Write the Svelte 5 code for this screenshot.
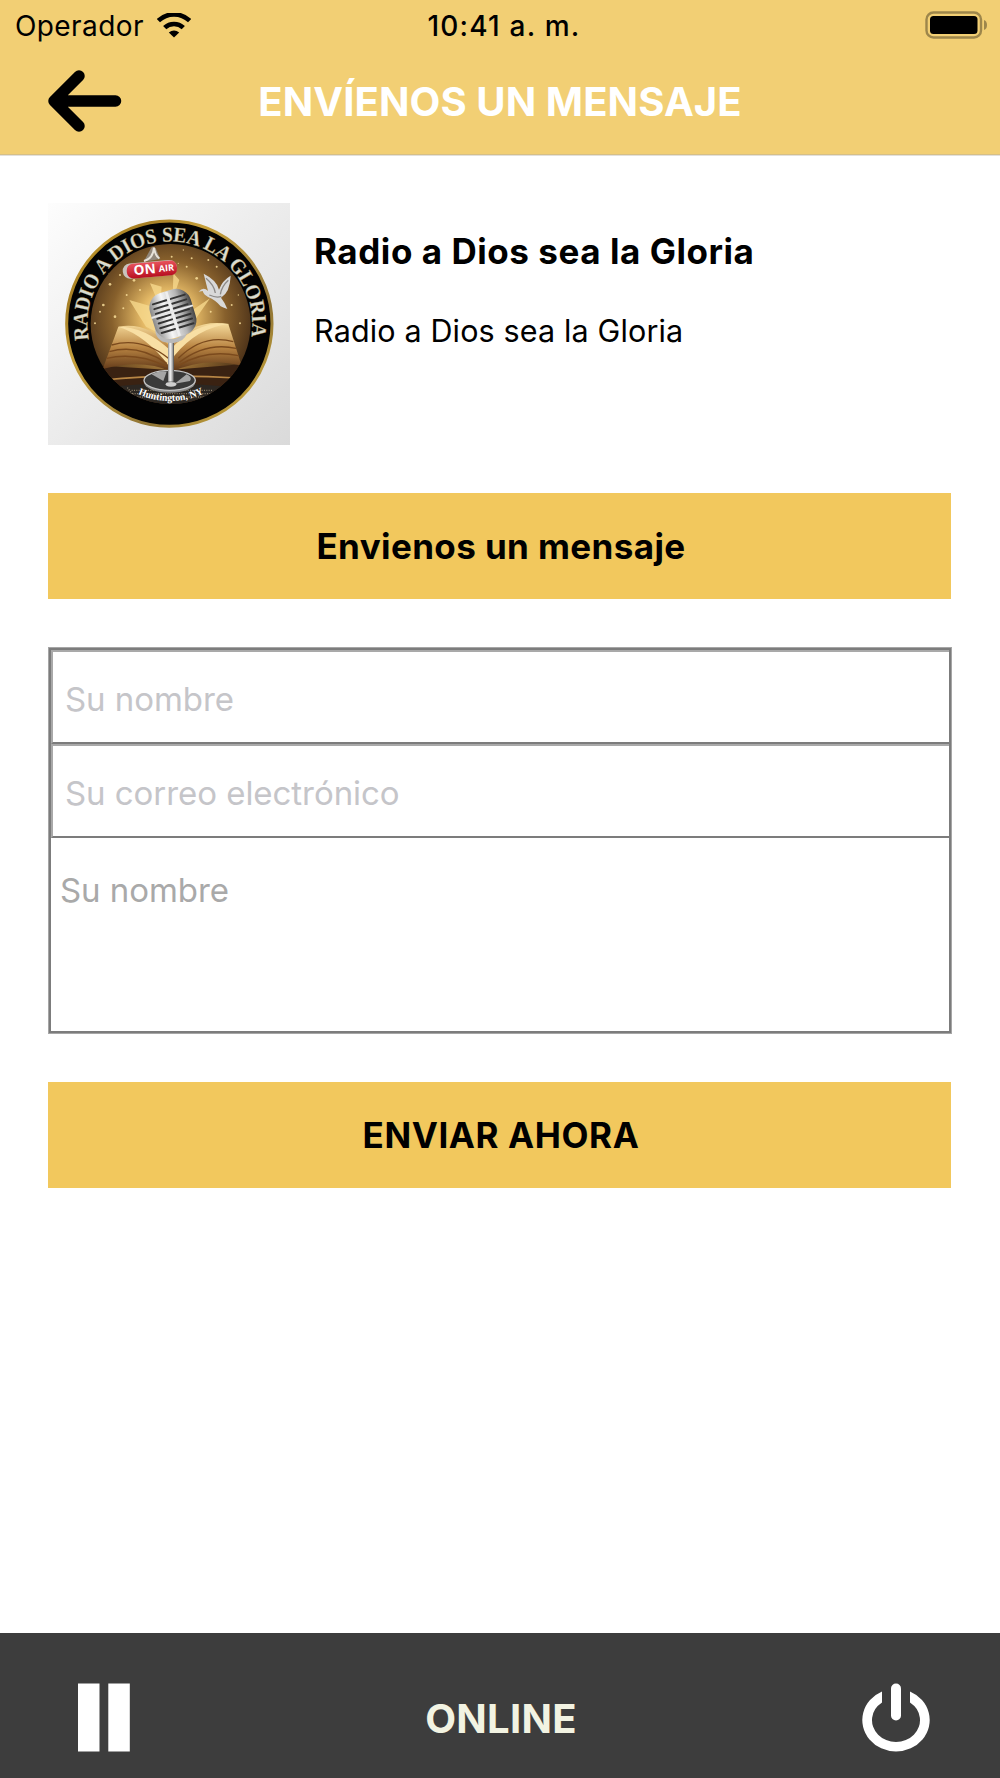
<script lang="ts">
	let name = $state('');
	let email = $state('');
	let message = $state('');

	const sparks = [
		[210, 268, 4], [240, 240, 3], [282, 256, 4], [300, 285, 3], [190, 330, 4], [165, 385, 3],
		[455, 190, 3], [470, 250, 4], [505, 195, 3], [560, 205, 3], [440, 215, 3], [395, 185, 3],
		[575, 330, 3], [225, 365, 4], [250, 340, 3], [530, 215, 3], [415, 205, 2], [595, 300, 2],
		[205, 235, 2], [180, 350, 3], [512, 350, 3], [260, 300, 3], [430, 165, 2], [600, 385, 3]
	];
	const slots = [0, 1, 2, 3, 4, 5, 6];
</script>

<div class="screen">
	<header class="top">
		<div class="status">
			<div class="carrier">
				<span class="operator">Operador</span>
				<svg class="wifi" viewBox="0 0 34 25">
					<path d="M1.4 7.7a22.500 22.500 0 0 1 31.200 0M7.700 14.700a13.400 13.400 0 0 1 18.600 0" fill="none" stroke="#000" stroke-width="4.6" />
					<path d="M11.800 19.600q5.200-4 10.400 0L17 24.600Z" />
				</svg>
			</div>
			<span class="time">10:41 a. m.</span>
			<svg class="battery" viewBox="0 0 64 28">
				<rect x="1.5" y="1.5" width="54.5" height="25" rx="7" fill="none" stroke="#9d864b" stroke-width="2.4" />
				<rect x="5" y="5" width="47.5" height="18" rx="3.5" />
				<path d="M59 9q3 1.200 3 5t-3 5Z" fill="#9d864b" />
			</svg>
		</div>
		<div class="nav">
			<button class="back" type="button" aria-label="Atrás">
				<svg viewBox="0 0 74 62">
					<path d="M31 6 6 31l25 25M6 31h61.500" fill="none" stroke="#000" stroke-width="11.500" stroke-linecap="round" stroke-linejoin="round" />
					<path d="M8 31 18 20v22z" />
				</svg>
			</button>
			<h1>ENVÍENOS UN MENSAJE</h1>
		</div>
	</header>

	<main>
		<section class="station">
			<svg class="logo" viewBox="24 24 726 726">
				<defs>
					<linearGradient id="paper" x1="0" y1="0" x2="1" y2="1">
						<stop offset="0" stop-color="#fdfdfd" />
						<stop offset="1" stop-color="#dadada" />
					</linearGradient>
					<linearGradient id="gold" x1="0" y1="0" x2="1" y2="1">
						<stop offset="0" stop-color="#e2b62f" />
						<stop offset="0.2" stop-color="#a67f25" />
						<stop offset="0.35" stop-color="#c7a03a" />
						<stop offset="0.7" stop-color="#8f7435" />
						<stop offset="1" stop-color="#e0b838" />
					</linearGradient>
					<radialGradient id="glow" cx="0.48" cy="0.45" r="0.58">
						<stop offset="0" stop-color="#fff3c4" />
						<stop offset="0.28" stop-color="#e3b865" />
						<stop offset="0.6" stop-color="#87602c" />
						<stop offset="1" stop-color="#3c2513" />
					</radialGradient>
					<linearGradient id="page" x1="0" y1="0" x2="0" y2="1">
						<stop offset="0" stop-color="#f6dc9c" />
						<stop offset="0.5" stop-color="#b98442" />
						<stop offset="1" stop-color="#5b3416" />
					</linearGradient>
					<linearGradient id="steel" x1="0" y1="0" x2="1" y2="0">
						<stop offset="0" stop-color="#888" />
						<stop offset="0.35" stop-color="#f6f6f6" />
						<stop offset="0.7" stop-color="#b5b5b5" />
						<stop offset="1" stop-color="#444" />
					</linearGradient>
					<linearGradient id="sign" x1="0" y1="0" x2="0" y2="1">
						<stop offset="0" stop-color="#e8525c" />
						<stop offset="1" stop-color="#b80f20" />
					</linearGradient>
					<clipPath id="disc"><circle cx="392" cy="387" r="240" /></clipPath>
					<path id="nameArc" d="M147 434A247 247 0 1 1 634 421" />
					<path id="cityArc" d="M294 597A232 232 0 0 0 494 594" />
				</defs>
				<rect x="24" y="24" width="726" height="726" fill="url(#paper)" />
				<circle cx="388" cy="386" r="308" fill="#020202" stroke="url(#gold)" stroke-width="9" />
				<g clip-path="url(#disc)">
					<rect x="150" y="145" width="490" height="490" fill="url(#glow)" />
					<path d="M330 265l35 10-5 60zM400 235l18 20-20 60zM268 315l70 20 10 75-30-15zM510 310l-60 40-10 60z" fill="#f6d88c" opacity="0.8" />
					{#each sparks as [x, y, r]}
						<circle cx={x} cy={y} r={r} fill="#ffe6a0" opacity="0.8" />
					{/each}
					<path d="M150 510 390 525 640 505V640H150Z" fill="#3a2212" />
					<path d="M190 555q190-20 400-6" fill="none" stroke="#b88645" stroke-width="5" />
					<path d="M188 522 235 395q90-15 155 60q70-85 175-68l40 125q-110-28-210 18q-90-40-207-8Z" fill="url(#page)" />
					<path d="M235 395q80 0 155 70q80-90 178-78q-95 10-165 95l-13 35q-70-95-155-122Z" fill="#f8dfa4" />
					<path d="M215 450q90-25 170 40M208 470q85-25 172 35M200 490q90-20 180 25M580 440q-90-25-165 50M588 460q-90-20-170 42M596 482q-100-20-180 30" fill="none" stroke="#7b4a1d" stroke-width="4" />
					<path d="M205 575q180-18 365 0l-45 52H250Z" fill="#2c2722" />
					<path d="M262 578l40 50M275 586h245M270 596h250M285 606h220" stroke="#8f8069" stroke-width="4" stroke-dasharray="3 4" />
				</g>
				<path d="M333 160q4-8 14 0l14 32-50 8z" fill="#91877b" />
				<path d="M312 198q28-8 30-40 4 26 16 32" fill="none" stroke="#e7e2da" stroke-width="6" />
				<rect x="248" y="200" width="163" height="46" rx="22" fill="#c9c3bd" transform="rotate(-5 330 222)" />
				<rect x="260" y="202" width="151" height="44" rx="19" fill="url(#sign)" transform="rotate(-5 330 222)" />
				<g class="sign-text" transform="rotate(-5 330 222)">
					<text x="281" y="236" font-size="40" textLength="66" lengthAdjust="spacingAndGlyphs">ON</text>
					<text x="356" y="233" font-size="27" textLength="46" lengthAdjust="spacingAndGlyphs">AIR</text>
				</g>
				<path d="M476 290q14-16 28-2l-13-52q40 20 46 48 10-28 35-42-2 50-29 66 10 12 19 34-14-4-20-8-14-18-38-28-14-8-16-18z" fill="#d9d9d9" />
				<path d="M498 250q24 20 28 44M565 256q-20 18-24 42M508 300q22 10 36 4" fill="none" stroke="#8c8a88" stroke-width="4" />
				<ellipse cx="389" cy="562" rx="77" ry="31" fill="#8a8a8a" />
				<ellipse cx="389" cy="556" rx="77" ry="30" fill="#3a3a3a" stroke="#c5c5c5" stroke-width="4" />
				<path d="M335 538q24-12 45-8l-10 28zM404 566l36-28q18 8 10 20z" fill="#a5a5a5" />
				<rect x="384" y="435" width="18" height="125" fill="url(#steel)" />
				<ellipse cx="393" cy="568" rx="16" ry="7" fill="#cfcfcf" />
				<path d="M352 362v46q4 32 48 30 28-4 34-22" fill="none" stroke="#b9b9b9" stroke-width="12" />
				<g transform="rotate(-17 398 358)">
					<rect x="335" y="286" width="128" height="142" rx="46" fill="url(#steel)" />
					{#each slots as i}
						<path d="M350 {312 + i * 15}h42M406 {312 + i * 15}h44" stroke="#343434" stroke-width="6" stroke-linecap="round" />
					{/each}
					<path d="M399 288v138" stroke="#eee" stroke-width="8" />
					<path d="M334 350h130" stroke="#e6e6e6" stroke-width="6" />
				</g>
				<text class="ring-text" font-size="63">
					<textPath href="#nameArc" textLength="862" lengthAdjust="spacingAndGlyphs">RADIO A DIOS SEA LA GLORIA</textPath>
				</text>
				<text class="city-text" font-size="30">
					<textPath href="#cityArc" textLength="204" lengthAdjust="spacingAndGlyphs">Huntington, NY</textPath>
				</text>
			</svg>
			<div class="about">
				<h2>Radio a Dios sea la Gloria</h2>
				<p>Radio a Dios sea la Gloria</p>
			</div>
		</section>

		<div class="banner heading">Envienos un mensaje</div>

		<form id="contact" onsubmit={(e) => e.preventDefault()}>
			<input type="text" placeholder="Su nombre" bind:value={name} />
			<input type="email" placeholder="Su correo electrónico" bind:value={email} />
			<textarea placeholder="Su nombre" bind:value={message}></textarea>
		</form>

		<button class="banner send" type="submit" form="contact">ENVIAR AHORA</button>
	</main>

	<footer>
		<button class="pause" type="button" aria-label="Pausa">
			<svg viewBox="0 0 52 69">
				<path d="M0 .5h21.500v68H0zM30.300.5h21.500v68H30.300z" fill="#fff" />
			</svg>
		</button>
		<span class="online">ONLINE</span>
		<button class="power" type="button" aria-label="Apagar">
			<svg viewBox="0 0 68 69">
				<path d="M20 8.500A33.700 31.400 0 1 0 48 8.500V19.400A24 21.800 0 1 1 20 19.400Z" fill="#fff" />
				<rect x="29" y="0.500" width="10" height="37" rx="5" fill="#fff" />
			</svg>
		</button>
	</footer>
</div>

<style>
	:global(body) {
		background: #fff;
	}

	.screen {
		display: flex;
		flex-direction: column;
		height: 1778px;
		font-family: Inter, 'Liberation Sans', sans-serif;
		color: #000;
	}

	svg {
		display: block;
	}

	button {
		border: none;
		padding: 0;
		background: none;
		font-family: inherit;
		color: inherit;
	}

	h1,
	h2,
	p {
		margin: 0;
		white-space: nowrap;
	}

	.top {
		box-sizing: border-box;
		height: 155px;
		background: #f2cf74;
		border-bottom: 1px solid #d6bf86;
		box-shadow: 0 1px #e2e0dc;
	}

	.status {
		display: grid;
		grid-template-columns: 1fr auto 1fr;
		align-items: center;
		height: 50px;
		padding: 1px 11px 0 15px;
		font-size: 28px;
	}

	.carrier {
		display: flex;
		align-items: center;
		gap: 13px;
	}

	.operator {
		letter-spacing: 0.4px;
	}

	.wifi {
		width: 34px;
		height: 25px;
		margin-top: -2px;
	}

	.time {
		margin-left: 4px;
		font-weight: 500;
		letter-spacing: 1.2px;
	}

	.battery {
		width: 64px;
		height: 28px;
		margin-top: -3px;
		justify-self: end;
	}

	.nav {
		display: grid;
		grid-template-columns: 74px 1fr 74px;
		align-items: center;
		height: 101px;
		padding: 0 48px;
	}

	.back svg {
		width: 74px;
		height: 62px;
		margin-top: -1px;
	}

	h1 {
		font-size: 40px;
		font-weight: 700;
		letter-spacing: 0.1px;
		color: #fff;
		text-align: center;
	}

	main {
		flex: 1;
		display: flex;
		flex-direction: column;
		padding: 48px 48px 0;
	}

	.station {
		display: flex;
		gap: 24px;
		height: 242px;
		margin-bottom: 48px;
	}

	.logo {
		width: 242px;
		height: 242px;
	}

	.sign-text {
		font-family: 'Open Sans', sans-serif;
		font-weight: 700;
		fill: #fff;
	}

	.ring-text {
		font-family: 'Liberation Serif', serif;
		font-weight: 700;
		fill: #d9dcd2;
		stroke: #a8873b;
		stroke-width: 1;
	}

	.city-text {
		font-family: 'Liberation Serif', serif;
		font-weight: 700;
		fill: #fff;
	}

	.about {
		padding-top: 26px;
	}

	h2 {
		font-size: 35px;
		line-height: 44px;
		font-weight: 700;
		letter-spacing: 0.55px;
	}

	p {
		margin-top: 38px;
		font-size: 30.5px;
		line-height: 40px;
		letter-spacing: 0.15px;
	}

	.banner {
		box-sizing: border-box;
		display: flex;
		align-items: center;
		justify-content: center;
		height: 106px;
		width: 903px;
		padding-left: 3px;
		background: #f2c85d;
		font-size: 35px;
		font-weight: 700;
		letter-spacing: 0.4px;
	}

	.send {
		letter-spacing: 0.6px;
	}

	form {
		box-sizing: border-box;
		display: flex;
		flex-direction: column;
		width: 904px;
		height: 387px;
		margin: 48px 0;
		border: 1px solid #a6a6a6;
		outline: 2px solid #7c7c7c;
		outline-offset: -3px;
		padding: 2px;
	}

	input,
	textarea {
		box-sizing: border-box;
		display: block;
		width: 100%;
		margin: 0;
		border: none;
		border-radius: 0;
		background: none;
		font-family: inherit;
		font-size: 33px;
		letter-spacing: -0.05px;
		color: #000;
		outline: none;
		resize: none;
	}

	input {
		height: 94px;
		border: solid #a9a9a9;
		border-width: 2px 0 0 2px;
		border-bottom: 2px solid #7c7c7c;
		padding: 4px 12px 0;
	}

	textarea {
		flex: 1;
		padding: 32px 9px;
		line-height: 40px;
	}

	input::placeholder {
		color: #c5c5c9;
		opacity: 1;
	}

	textarea::placeholder {
		color: #a9a9a9;
		opacity: 1;
	}

	footer {
		display: grid;
		grid-template-columns: 74px 1fr 74px;
		align-items: center;
		height: 145px;
		box-sizing: border-box;
		padding: 24px 70px 0 72px;
		background: #3d3d3d;
	}

	.pause svg {
		width: 52px;
		height: 69px;
		margin-left: 6px;
	}

	.power {
		justify-self: end;
	}

	.power svg {
		width: 68px;
		height: 69px;
	}

	.online {
		padding-top: 2px;
		font-size: 40px;
		font-weight: 700;
		letter-spacing: 0.3px;
		text-align: center;
		color: #f2f3e2;
	}
</style>
